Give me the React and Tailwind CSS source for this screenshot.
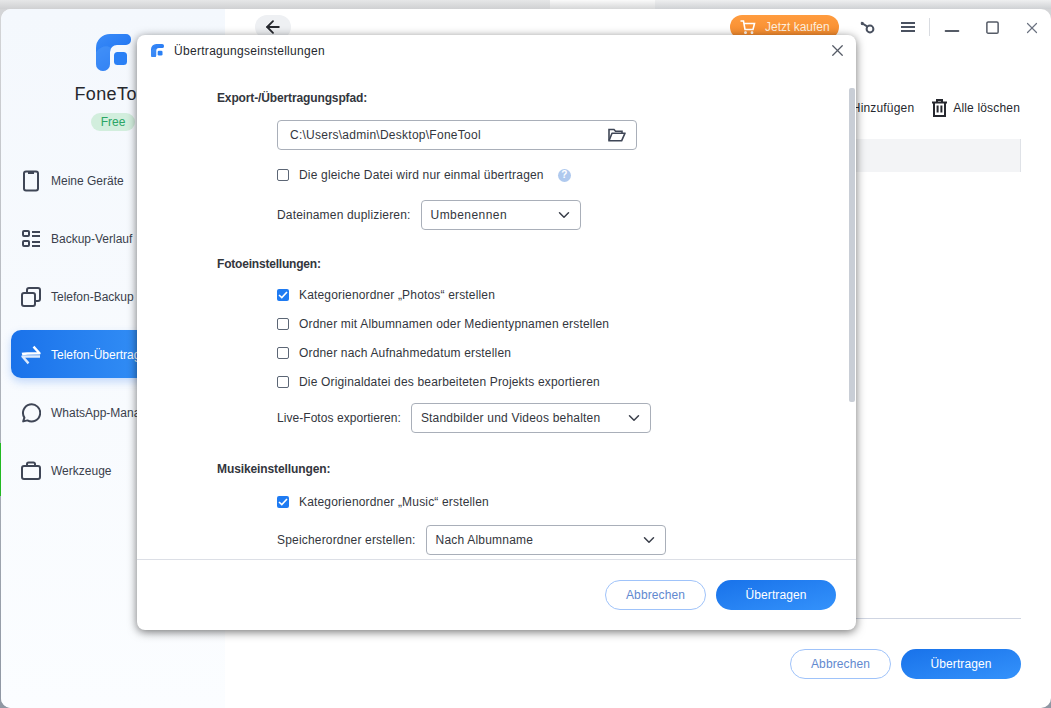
import { useId } from "react";
import { ChevronDown, X, ArrowLeft, Minus, Square } from "lucide-react";

const NAV = [
  { label: "Meine Geräte", icon: PhoneIcon },
  { label: "Backup-Verlauf", icon: ListIcon },
  { label: "Telefon-Backup", icon: CopyIcon },
  { label: "Telefon-Übertragung", icon: SwapIcon, active: true },
  { label: "WhatsApp-Manager", icon: ChatIcon },
  { label: "Werkzeuge", icon: CaseIcon },
];

function PhoneIcon() {
  return (
    <svg width="18" height="22" viewBox="0 0 18 22" fill="none" stroke="#3f4656" strokeWidth="2">
      <rect x="2" y="1.5" width="14" height="19" rx="2" />
      <path d="M6 2.5h6" strokeWidth="3" />
    </svg>
  );
}

function ListIcon() {
  return (
    <svg width="20" height="20" viewBox="0 0 20 20" fill="none" stroke="#3f4656" strokeWidth="2">
      <rect x="2" y="2" width="6" height="5" rx="1" />
      <rect x="2" y="12" width="6" height="5" rx="1" />
      <path d="M11 3h8M11 7h8M11 13h8M11 17h8" />
    </svg>
  );
}

function CopyIcon() {
  return (
    <svg width="20" height="20" viewBox="0 0 20 20" fill="none" stroke="#3f4656" strokeWidth="2">
      <rect x="1" y="6" width="13" height="13" rx="2" />
      <path d="M6 6V3a2 2 0 0 1 2-2h9a2 2 0 0 1 2 2v9a2 2 0 0 1-2 2h-3" />
    </svg>
  );
}

function SwapIcon() {
  return (
    <svg width="22" height="20" viewBox="0 0 22 20" fill="none" stroke="#fff" strokeWidth="2.4" strokeLinejoin="round">
      <path d="M2 9 C4 8.4 6 8.3 19.5 8.3 L13.5 1.6" />
      <path d="M20 11.5 H2.5 L8.5 18.4" opacity="0.85" />
    </svg>
  );
}

function ChatIcon() {
  return (
    <svg width="20" height="20" viewBox="0 0 20 20" fill="none" stroke="#3f4656" strokeWidth="2">
      <path d="M2.2 18.4 3.4 14.6A8.6 8.6 0 1 1 6.4 17.4Z" strokeLinejoin="round" />
    </svg>
  );
}

function CaseIcon() {
  return (
    <svg width="20" height="20" viewBox="0 0 20 20" fill="none" stroke="#3f4656" strokeWidth="2">
      <rect x="1" y="5" width="18" height="13" rx="2" />
      <path d="M6 5V3a1.5 1.5 0 0 1 1.5-1.5h5A1.5 1.5 0 0 1 14 3v2" />
    </svg>
  );
}

function Logo({ size }) {
  const id = useId();
  return (
    <svg width={size} height={size * 37 / 35} viewBox="0 0 35 37">
      <defs>
        <linearGradient id={id} x1="0" y1="0" x2="0.6" y2="1">
          <stop offset="0" stopColor="#3b8cf8" />
          <stop offset="1" stopColor="#1a6ff0" />
        </linearGradient>
      </defs>
      <path d="M14 0H30a5 5 0 0 1 5 5v1a5 5 0 0 1-5 5H21a7 7 0 0 0-7 7V30a7 7 0 0 1-14 0V14A14 14 0 0 1 14 0Z" fill={`url(#${id})`} />
      <path d="M0 18c5-6 11-7 15-4l-1 4V30a7 7 0 0 1-14 0Z" fill="#5ea6fb" opacity="0.35" />
      <rect x="18" y="18" width="13" height="13" rx="3.5" fill="#2a80f5" />
    </svg>
  );
}

function Cart() {
  return (
    <svg width="16" height="14" viewBox="0 0 16 14" fill="none" stroke="#fff" strokeWidth="1.6">
      <path d="M0.5 1H3.5L5 9.5H13L14.5 3.5H4" />
      <circle cx="5.5" cy="12.7" r="0.6" />
      <circle cx="12" cy="12.7" r="0.6" />
    </svg>
  );
}

function KeyIcon() {
  return (
    <svg width="15" height="13" viewBox="0 0 15 13" fill="none" stroke="#4a5160" strokeWidth="2">
      <circle cx="10" cy="8" r="3.4" />
      <path d="M7.4 5.6 1 1.5M2.8 1 1.8 4" />
    </svg>
  );
}

function TrashIcon() {
  return (
    <svg width="15" height="18" viewBox="0 0 15 18" fill="none" stroke="#26282e" strokeWidth="2">
      <path d="M0 3.5H15M5 3.5V1H10V3.5" />
      <path d="M2 3.5V17H13V3.5" />
      <path d="M5.6 6.5V13.5M9.4 6.5V13.5" />
    </svg>
  );
}

function FolderIcon() {
  return (
    <svg width="18" height="14" viewBox="0 0 18 14" fill="none" stroke="#3f4656" strokeWidth="1.6">
      <path d="M1 12.5V1.5H6L7.5 3.2H14V5" />
      <path d="M1 12.8H13.6L17 5.2H4L1 12.8Z" strokeLinejoin="round" />
    </svg>
  );
}

function Check({ checked }) {
  if (checked) {
    return (
      <span className="flex w-3 h-3 shrink-0 items-center justify-center rounded-[2px] bg-[#1f7bf2]">
        <svg width="10" height="8" viewBox="0 0 10 8" fill="none" stroke="#fff" strokeWidth="1.6">
          <path d="M1 4 3.8 6.6 9 1" />
        </svg>
      </span>
    );
  }
  return <span className="block w-3 h-3 shrink-0 rounded-[2px] border border-[#5c6675] bg-white" />;
}

function CheckRow({ checked, children, className = "" }) {
  return (
    <div className={`flex h-4 items-center gap-[10px] tracking-[0.17px] ${className}`}>
      <Check checked={checked} />
      <span>{children}</span>
    </div>
  );
}

function SelectRow({ label, value, width, labelClass = "tracking-[0.18px]", valueClass = "tracking-[0.2px]", className = "" }) {
  return (
    <div className={`flex items-center gap-[10px] ${className}`}>
      <span className={labelClass}>{label}</span>
      <div className={`flex h-[30px] items-center justify-between rounded-[4px] border border-[#a9afb9] pl-[9px] pr-[7px] ${width}`}>
        <span className={valueClass}>{value}</span>
        <ChevronDown size={18} strokeWidth={2} color="#3a3f4a" />
      </div>
    </div>
  );
}

function PrimaryButton({ children }) {
  return (
    <button className="h-[30px] w-[120px] rounded-full bg-gradient-to-br from-[#1872ea] to-[#3492fb] text-xs tracking-[0.1px] text-white">
      {children}
    </button>
  );
}

function GhostButton({ children }) {
  return (
    <button className="h-[30px] w-[101px] rounded-full border border-[#9fc3fa] bg-white text-xs tracking-[0.1px] text-[#6289cf]">
      {children}
    </button>
  );
}

function SettingsDialog() {
  return (
    <div className="absolute left-[137px] top-[35px] flex h-[595px] w-[719px] flex-col overflow-hidden rounded-[8px] bg-white text-xs text-[#33363d] shadow-[0_2px_10px_rgba(0,0,0,0.55)]">
      <div className="flex h-[31px] shrink-0 items-center pl-[14px] pr-[9px]">
        <Logo size={13} />
        <span className="ml-[10px] tracking-[0.3px] text-[#26282e]">Übertragungseinstellungen</span>
        <X size={19} strokeWidth={1.6} color="#555b66" className="ml-auto" />
      </div>

      <div className="relative min-h-0 flex-1 overflow-hidden pl-[80px] pt-[25px]">
        <div className="font-bold leading-[14px] tracking-[-0.13px]">Export-/Übertragungspfad:</div>
        <div className="ml-[60px] mt-[15px] flex h-[30px] w-[360px] items-center justify-between rounded-[4px] border border-[#a9afb9] pl-[12px] pr-[10px]">
          <span className="tracking-[0.26px]">C:\Users\admin\Desktop\FoneTool</span>
          <FolderIcon />
        </div>
        <div className="ml-[60px] mt-[17px] flex h-4 items-center gap-[10px]">
          <Check />
          <span className="tracking-[0.18px]">Die gleiche Datei wird nur einmal übertragen</span>
          <span className="ml-[4px] flex h-[13px] w-[13px] items-center justify-center rounded-full bg-[#afc9ee] text-[10px] font-bold text-white">?</span>
        </div>
        <SelectRow className="ml-[60px] mt-[17px]" label="Dateinamen duplizieren:" value="Umbenennen" valueClass="tracking-[0.45px]" width="w-[160px]" />

        <div className="mt-[27px] font-bold leading-[14px] tracking-[-0.2px]">Fotoeinstellungen:</div>
        <div className="ml-[60px] mt-[16px] flex flex-col gap-[13px]">
          <CheckRow checked>Kategorienordner „Photos“ erstellen</CheckRow>
          <CheckRow>Ordner mit Albumnamen oder Medientypnamen erstellen</CheckRow>
          <CheckRow>Ordner nach Aufnahmedatum erstellen</CheckRow>
          <CheckRow>Die Originaldatei des bearbeiteten Projekts exportieren</CheckRow>
        </div>
        <SelectRow className="ml-[60px] mt-[13px]" label="Live-Fotos exportieren:" labelClass="tracking-[0.05px]" value="Standbilder und Videos behalten" width="w-[240px]" />

        <div className="mt-[29px] font-bold leading-[14px] tracking-[-0.1px]">Musikeinstellungen:</div>
        <CheckRow checked className="ml-[60px] mt-[18px]">Kategorienordner „Music“ erstellen</CheckRow>
        <SelectRow className="ml-[60px] mt-[15px]" label="Speicherordner erstellen:" value="Nach Albumname" width="w-[240px]" />

        {/* scrollbar */}
        <div className="absolute right-[1px] top-[22px] h-[314px] w-[6px] rounded-[2px] bg-[#c9ced6]" />
      </div>

      <div className="flex h-[71px] shrink-0 items-center justify-end gap-[10px] border-t border-[#dcdfe6] pr-[20px]">
        <GhostButton>Abbrechen</GhostButton>
        <PrimaryButton>Übertragen</PrimaryButton>
      </div>
    </div>
  );
}

export default function App() {
  return (
    <div className="relative h-[708px] w-[1051px] overflow-hidden bg-gradient-to-b from-[#d5d6d8] to-[#8f97a3] font-['Liberation_Sans',Arial,sans-serif]">
      {/* desktop behind the window */}
      <div className="flex h-[9px]">
        <div className="w-[550px] bg-gradient-to-b from-[#e6e7e8] to-[#cfd0d2]" />
        <div className="w-[105px] bg-gradient-to-b from-[#fafafa] to-[#d6d7d8]" />
        <div className="flex-1 bg-gradient-to-b from-[#eeeff0] to-[#cfd1d4]" />
      </div>
      <div className="absolute left-0 top-[443px] h-[53px] w-px bg-[#22b922]" />

      <div className="ml-px flex h-[699px] overflow-hidden rounded-[10px] bg-white text-xs text-[#33363d]">
        <aside className="flex w-[224px] shrink-0 flex-col items-center bg-gradient-to-b from-[#f4f8fd] to-[#fbfdff] pt-[25px]">
          <Logo size={35} />
          <div className="mt-[11px] text-[18px] leading-[24px] tracking-[0.4px] text-[#26282e]">FoneTool</div>
          <div className="mt-[7px] rounded-full bg-[#d2eedd] px-[10px] py-[2px] text-xs leading-[14px] text-[#2ba566]">Free</div>
          <nav className="mt-[25px] flex w-full flex-col gap-[10px] pl-[10px] pr-[10px]">
            {NAV.map((item) => {
              const Icon = item.icon;
              return (
                <div
                  key={item.label}
                  className={
                    item.active
                      ? "flex h-[48px] items-center rounded-[10px] bg-gradient-to-r from-[#1a72ea] to-[#3f9cfb] pt-[2px] text-white shadow-[0_4px_8px_rgba(40,120,240,0.25)]"
                      : "flex h-[48px] items-center pt-[2px] text-[#3a3f4c]"
                  }
                >
                  <span className="flex w-[40px] justify-center">
                    <Icon />
                  </span>
                  <span>{item.label}</span>
                </div>
              );
            })}
          </nav>
        </aside>

        <main className="flex min-w-0 flex-1 flex-col pb-[29px] pl-[30px] tracking-[0.17px]">
          <div className="flex h-[36px] shrink-0 items-start pt-[6px]">
            <div className="flex h-[24px] w-[36px] items-center justify-center rounded-full bg-[#eef0f3]">
              <ArrowLeft size={20} strokeWidth={2.2} color="#26282e" />
            </div>
            <div className="ml-auto flex h-[24px] w-[109px] items-center gap-[9px] rounded-full bg-gradient-to-b from-[#ff9c3f] to-[#f58a2c] pl-[10px] text-xs tracking-normal text-[#fdeedd]">
              <Cart />
              <span>Jetzt kaufen</span>
            </div>
            <div className="ml-[21px] mt-[6px]"><KeyIcon /></div>
            <div className="ml-[26px] mt-[7px] flex w-[14px] flex-col gap-[2px]">
              <span className="h-[2px] bg-[#4a5160]" />
              <span className="h-[2px] bg-[#4a5160]" />
              <span className="h-[2px] bg-[#4a5160]" />
            </div>
            <div className="ml-[14px] mt-[3px] h-[18px] w-px bg-[#d9dce1]" />
            <Minus size={22} strokeWidth={2} color="#555b66" className="ml-[11px] mt-[5px]" />
            <Square size={15} strokeWidth={2.4} color="#555b66" className="ml-[22px] mt-[5px]" />
            <X size={18} strokeWidth={1.6} color="#6b7280" className="ml-[23px] mr-[10px] mt-[4px]" />
          </div>

          <div className="mt-[54px] flex h-[18px] shrink-0 items-center justify-end pr-[31px] text-[#26282e]">
            <span>Hinzufügen</span>
            <span className="ml-[18px]"><TrashIcon /></span>
            <span className="ml-[6px]">Alle löschen</span>
          </div>
          <div className="mr-[30px] mt-[22px] h-[33px] shrink-0 border-r border-[#dfe2e7] bg-[#f3f4f6]" />
          <div className="flex-1" />
          <div className="mr-[30px] flex shrink-0 items-center justify-end gap-[10px] border-t border-[#cfd5e2] pt-[30px]">
            <GhostButton>Abbrechen</GhostButton>
            <PrimaryButton>Übertragen</PrimaryButton>
          </div>
        </main>
      </div>

      <SettingsDialog />
    </div>
  );
}
